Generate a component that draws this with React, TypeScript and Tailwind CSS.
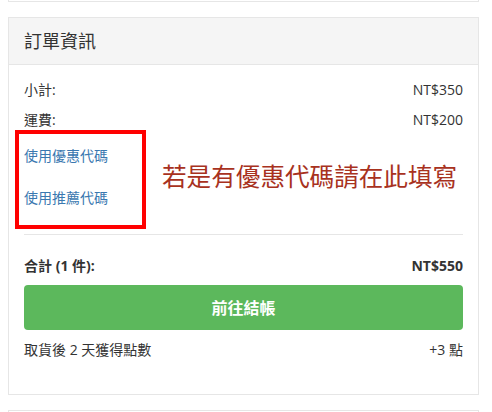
const font = {
  fontFamily: '"Open Sans", "Noto Sans CJK TC", sans-serif',
};

function Row({ label, value, bold }: { label: string; value: string; bold?: boolean }) {
  return (
    <div className={`flex h-5 items-center justify-between text-[14px] leading-5 ${bold ? "font-bold" : ""}`}>
      <span>{label}</span>
      <span>{value}</span>
    </div>
  );
}

export default function App() {
  return (
    <div className="relative h-[412px] w-[492px] overflow-hidden bg-white pl-2 text-[#333]" style={font}>
      <div className="h-[2px] w-[471px] border-x border-b border-[#e6e6e6]" />

      <div className="mt-[15px] w-[471px] border border-[#e6e6e6]">
        <div className="flex h-[47px] items-center border-b border-[#e6e6e6] bg-[#f5f5f5] px-[15px] text-[18px]">
          訂單資訊
        </div>
        <div className="px-[15px] pb-[34px] pt-[15px]">
          <Row label="小計:" value="NT$350" />
          <div className="mt-[10px]">
            <Row label="運費:" value="NT$200" />
          </div>
          <div className="mt-4 h-5 text-[14px] leading-5 text-[#3a78b0]">使用優惠代碼</div>
          <div className="mt-[22px] h-5 text-[14px] leading-5 text-[#3a78b0]">使用推薦代碼</div>
          <div className="mt-[26px] border-t border-[#e6e6e6]" />
          <div className="mt-[21px]">
            <Row label="合計 (1 件):" value="NT$550" bold />
          </div>
          <button className="mt-[9px] flex h-[45px] w-full items-center justify-center rounded bg-[#5cb85c] text-[16px] font-bold text-white">
            前往結帳
          </button>
          <div className="mt-[10px]">
            <Row label="取貨後 2 天獲得點數" value="+3 點" />
          </div>
        </div>
      </div>

      <div className="mt-[15px] h-[10px] w-[471px] border-x border-t border-[#e6e6e6]" />

      <div className="absolute left-[15px] top-[130px] h-[99px] w-[131px] border-4 border-[#ff0000]" />
      <div className="absolute left-[162px] top-[162px] text-[24.6px] leading-[30px] text-[#a8321e]">
        若是有優惠代碼請在此填寫
      </div>
    </div>
  );
}
